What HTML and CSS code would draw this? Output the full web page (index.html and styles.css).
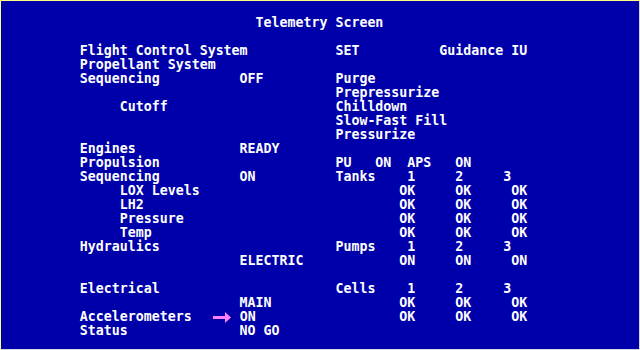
FILE: index.html
```html
<!DOCTYPE html>
<html>
<head>
<meta charset="utf-8">
<title>Telemetry Screen</title>
<link rel="stylesheet" href="styles.css">
</head>
<body>
<div class="screen">
<pre class="term">                                Telemetry Screen

          Flight Control System           SET          Guidance IU
          Propellant System
          Sequencing          OFF         Purge
                                          Prepressurize
               Cutoff                     Chilldown
                                          Slow-Fast Fill
                                          Pressurize
          Engines             READY
          Propulsion                      PU   ON  APS   ON
          Sequencing          ON          Tanks    1     2     3
               LOX Levels                         OK     OK     OK
               LH2                                OK     OK     OK
               Pressure                           OK     OK     OK
               Temp                               OK     OK     OK
          Hydraulics                      Pumps    1     2     3
                              ELECTRIC            ON     ON     ON

          Electrical                      Cells    1     2     3
                              MAIN                OK     OK     OK
          Accelerometers  <span class="arrow"><svg width="24" height="14" viewBox="0 0 24 14"><rect x="5" y="6" width="13" height="3" fill="#ff80ff"/><polygon points="17,2 23,7.5 17,13" fill="#ff80ff"/></svg></span> ON                  OK     OK     OK
          Status              NO GO</pre>
</div>
</body>
</html>
```
FILE: styles.css
```css
html, body {
  margin: 0;
  padding: 0;
  background: #0000aa;
}
.screen {
  width: 640px;
  height: 350px;
  box-sizing: border-box;
  background: #0000aa;
  border-top: 1px solid #ffff80;
  border-left: 1px solid #ffff80;
  border-right: 1px solid #d8d8e8;
  border-bottom: 1px solid #d8d8e8;
  padding-top: 15px;
  overflow: hidden;
}
.term {
  margin: 0 0 0 -1px;
  font-family: "DejaVu Sans Mono", "Liberation Mono", monospace;
  font-weight: bold;
  font-size: 13.28px;
  line-height: 14px;
  color: #ffffff;
  white-space: pre;
}
.arrow {
  display: inline-block;
  width: 24px;
  height: 14px;
  vertical-align: top;
  overflow: hidden;
}
.arrow svg {
  display: block;
}
```
